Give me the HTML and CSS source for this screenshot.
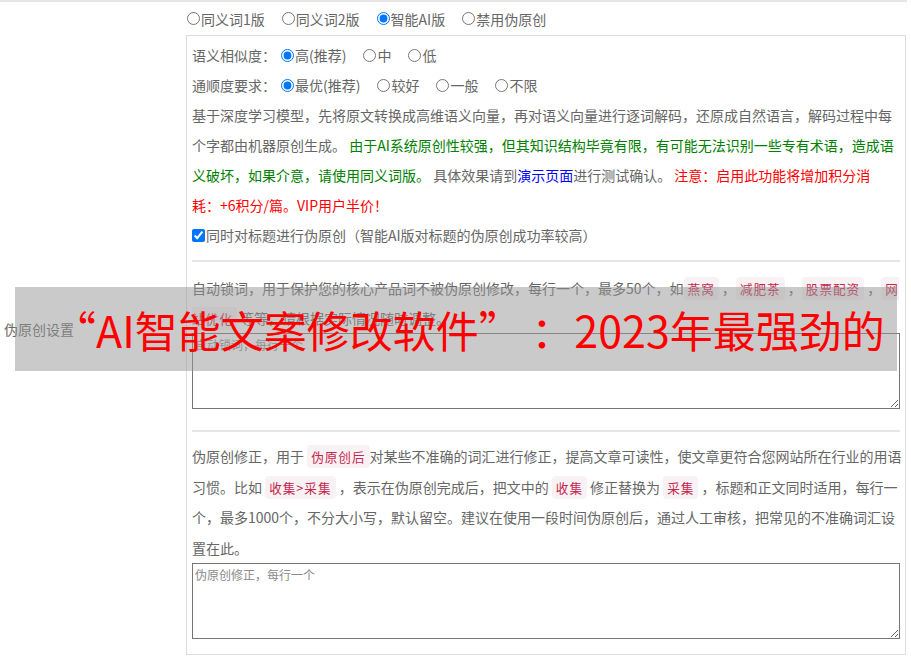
FILE: index.html
```html
<!DOCTYPE html>
<html lang="zh-CN">
<head>
<meta charset="utf-8">
<title>伪原创设置</title>
<link rel="stylesheet" href="styles.css">
</head>
<body>
<div class="topline"></div>
<div class="form-row">
  <div class="row-label">伪原创设置</div>
  <div class="row-body">
    <div class="mode-options">
      <label class="opt"><input type="radio" name="mode">同义词1版</label>
      <label class="opt"><input type="radio" name="mode">同义词2版</label>
      <label class="opt"><input type="radio" name="mode" checked>智能AI版</label>
      <label class="opt"><input type="radio" name="mode">禁用伪原创</label>
    </div>
    <div class="panel">
      <div class="setting">
        <span class="setting-name">语义相似度：</span>
        <label class="opt"><input type="radio" name="sim" checked>高(推荐)</label>
        <label class="opt"><input type="radio" name="sim">中</label>
        <label class="opt"><input type="radio" name="sim">低</label>
      </div>
      <div class="setting">
        <span class="setting-name">通顺度要求：</span>
        <label class="opt"><input type="radio" name="flu" checked>最优(推荐)</label>
        <label class="opt"><input type="radio" name="flu">较好</label>
        <label class="opt"><input type="radio" name="flu">一般</label>
        <label class="opt"><input type="radio" name="flu">不限</label>
      </div>
      <p class="desc">基于深度学习模型，先将原文转换成高维语义向量，再对语义向量进行逐词解码，还原成自然语言，解码过程中每个字都由机器原创生成。 <span class="ok">由于AI系统原创性较强，但其知识结构毕竟有限，有可能无法识别一些专有术语，造成语义破坏，如果介意，请使用同义词版。</span> 具体效果请到<a class="demo" href="#">演示页面</a>进行测试确认。 <span class="warn">注意：启用此功能将增加积分消<span class="nobr">耗：+6</span>积分/篇。VIP用户半价！</span></p>
      <label class="check-line"><input type="checkbox" checked>同时对标题进行伪原创（智能AI版对标题的伪原创成功率较高）</label>
      <hr class="divider first">
      <p class="desc">自动锁词，用于保护您的核心产品词不被伪原创修改，每行一个，最多50个，如<code>燕窝</code> ，<code>减肥茶</code> ，<code>股票配资</code> ，<code>网站优化</code> 等等，请根据实际情况随时调整。</p>
      <textarea class="words" placeholder="自动锁词，每行一个"></textarea>
      <hr class="divider second">
      <p class="desc fix-desc">伪原创修正，用于 <code>伪原创后</code>对某些不准确的词汇进行修正，提高文章可读性，使文章更符合您网站所在行业的用语习惯。比如 <code>收集&gt;采集</code> ，表示在伪原创完成后，把文中的 <code>收集</code> 修正替换为 <code>采集</code> ，标题和正文同时适用，每行一个，最多1000个，不分大小写，默认留空。建议在使用一段时间伪原创后，通过人工审核，把常见的不准确词汇设置在此。</p>
      <textarea class="words fix" placeholder="伪原创修正，每行一个"></textarea>
    </div>
  </div>
</div>
<div class="banner">“AI智能文案修改软件” ：2023年最强劲的</div>
</body>
</html>
```

FILE: styles.css
```css
html, body {
  margin: 0;
  padding: 0;
  background: #fff;
}
body {
  font-family: "Noto Sans CJK SC", "Microsoft YaHei", sans-serif;
  font-size: 14px;
  color: #666;
  width: 911px;
  height: 658px;
  overflow: hidden;
  position: relative;
}
.topline {
  width: 907px;
  border-top: 2px solid #e6e6e6;
}
.form-row {
  display: flex;
  align-items: center;
}
.row-label {
  width: 182px;
  padding-left: 4px;
  flex: none;
}
.row-body {
  width: 720px;
  flex: none;
}
.mode-options {
  height: 33px;
  display: flex;
  align-items: center;
  gap: 17px;
  padding-left: 1px;
}
.opt {
  display: inline-flex;
  align-items: center;
  white-space: nowrap;
}
.opt input {
  margin: 0 1px 0 0;
  width: 13px;
  height: 13px;
}
.panel {
  border: 1px solid #ddd;
  padding: 4px 0 15px 5px;
}
.setting {
  display: flex;
  align-items: center;
  height: 30px;
  gap: 17px;
}
.setting-name {
  margin-right: -12px;
}
.desc {
  margin: 0;
  line-height: 30px;
}
.fix-desc {
  line-height: 30.6px;
}
.nobr {
  white-space: nowrap;
}
.ok {
  color: #008000;
}
.warn {
  color: #ff0000;
}
.demo {
  color: #0000ff;
  text-decoration: none;
}
.check-line {
  display: flex;
  align-items: center;
  height: 30px;
}
.check-line input {
  margin: 0 1px 0 0;
  width: 13px;
  height: 13px;
}
.divider {
  border: 0;
  border-top: 2px solid #e6e6e6;
  height: 0;
  width: 708px;
  margin: 10px 0 11px 0;
}
.divider.second {
  margin: 21px 0 9px 0;
}
code {
  font-family: "Noto Sans CJK SC", sans-serif;
  font-size: 12.6px;
  line-height: 1;
  letter-spacing: 1px;
  color: #c7254e;
  background: #f9f2f4;
  padding: 2px 4px;
  border-radius: 4px;
}
.words {
  display: block;
  box-sizing: border-box;
  width: 708px;
  height: 76px;
  margin: 0;
  padding: 2px;
  border: 1px solid #767676;
  font-family: "Noto Sans CJK SC", sans-serif;
  font-size: 12px;
  color: #333;
}
.words::placeholder {
  color: #8a8a8a;
}
.banner {
  position: absolute;
  left: 15px;
  top: 287px;
  width: 844px;
  height: 84px;
  padding-left: 38px;
  background: rgba(150, 150, 150, 0.5);
  color: #ff0000;
  font-size: 43px;
  line-height: 84px;
  white-space: nowrap;
}
```
